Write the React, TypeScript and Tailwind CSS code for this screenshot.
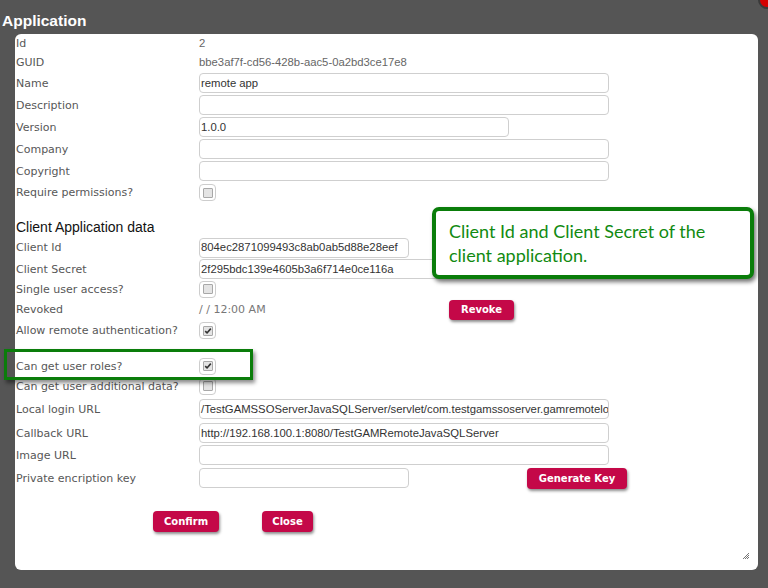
import React from "react";

const labelFont = { fontFamily: '"Liberation Sans", Arial, sans-serif' };
const verdana = { fontFamily: '"DejaVu Sans", Verdana, sans-serif' };

function Checkbox({ checked = false }: { checked?: boolean }) {
  return (
    <span className="flex h-[17px] w-[17px] items-center justify-center rounded-[4px] border border-[#cdcdcd] bg-white">
      <span className="relative flex h-[10px] w-[10px] items-center justify-center rounded-[1px] border border-[#a8a8a8] bg-[#e4e4e4]">
        {checked && (
          <svg viewBox="0 0 10 10" className="absolute h-[8px] w-[8px]">
            <path d="M1.5 5.2 L3.8 7.4 L8.5 2" stroke="#333" strokeWidth="2" fill="none" />
          </svg>
        )}
      </span>
    </span>
  );
}

function TextInput({ value = "", width }: { value?: string; width: string }) {
  return (
    <div
      className={`flex h-[20px] items-center overflow-hidden whitespace-nowrap rounded-[4px] border border-[#cfcfcf] bg-white pl-px text-[11.3px] text-[#333] ${width}`}
    >
      {value}
    </div>
  );
}

function RedButton({ children, className = "" }: { children: React.ReactNode; className?: string }) {
  return (
    <button
      className={`flex items-center justify-center rounded-[4px] bg-[#c40848] text-[10px] font-bold text-white shadow-[1px_2px_3px_rgba(0,0,0,0.45)] ${className}`}
      style={verdana}
    >
      {children}
    </button>
  );
}

function Row({ label, h, children }: { label: string; h: string; children?: React.ReactNode }) {
  return (
    <div className={`flex items-center ${h}`}>
      <div className="w-[184px] pl-px pt-[2px] text-[11px] text-[#575757]" style={verdana}>
        {label}
      </div>
      <div className="flex items-center">{children}</div>
    </div>
  );
}

export default function App() {
  return (
    <div className="relative h-[588px] w-[768px] overflow-hidden bg-[#555555]" style={labelFont}>
      {/* window header */}
      <div className="flex h-[34px] items-center pl-[2px] pt-[7px] text-[15.5px] font-bold text-white">Application</div>
      <div className="absolute left-[758px] top-[-9px] h-[18px] w-[18px] rounded-full border-2 border-[#3a3a3a] bg-[#d40000]" />

      <div className="relative ml-[15px] h-[536px] w-[743px] rounded-[6px] bg-white">
        <Row label="Id" h="h-[18px]">
          <span className="text-[11.3px] text-[#666]">2</span>
        </Row>
        <Row label="GUID" h="h-[20px]">
          <span className="text-[11.3px] text-[#666]">bbe3af7f-cd56-428b-aac5-0a2bd3ce17e8</span>
        </Row>
        <Row label="Name" h="h-[22px]">
          <TextInput value="remote app" width="w-[410px]" />
        </Row>
        <Row label="Description" h="h-[22px]">
          <TextInput width="w-[410px]" />
        </Row>
        <Row label="Version" h="h-[22px]">
          <TextInput value="1.0.0" width="w-[310px]" />
        </Row>
        <Row label="Company" h="h-[22px]">
          <TextInput width="w-[410px]" />
        </Row>
        <Row label="Copyright" h="h-[22px]">
          <TextInput width="w-[410px]" />
        </Row>
        <Row label="Require permissions?" h="h-[21px]">
          <Checkbox />
        </Row>

        <div className="mt-[14px] flex h-[20px] items-center pl-px text-[14px] text-[#111]">Client Application data</div>

        <Row label="Client Id" h="h-[21px]">
          <TextInput value="804ec2871099493c8ab0ab5d88e28eef" width="w-[210px]" />
        </Row>
        <Row label="Client Secret" h="h-[22px]">
          <TextInput value="2f295bdc139e4605b3a6f714e0ce116a" width="w-[410px]" />
        </Row>
        <Row label="Single user access?" h="h-[18px]">
          <Checkbox />
        </Row>
        <Row label="Revoked" h="h-[23px]">
          <span className="w-[250px] pt-[2px] text-[11px] text-[#777]" style={verdana}>
            / / 12:00 AM
          </span>
          <RedButton className="h-[20px] w-[65px]">Revoke</RedButton>
        </Row>
        <Row label="Allow remote authentication?" h="h-[19px]">
          <Checkbox checked />
        </Row>

        <div className="mt-[16px]" />
        <Row label="Can get user roles?" h="h-[20px]">
          <Checkbox checked />
        </Row>
        <Row label="Can get user additional data?" h="h-[20px]">
          <Checkbox />
        </Row>
        <Row label="Local login URL" h="h-[26px]">
          <TextInput value="/TestGAMSSOServerJavaSQLServer/servlet/com.testgamssoserver.gamremotelogin" width="w-[410px]" />
        </Row>
        <Row label="Callback URL" h="h-[22px]">
          <TextInput value="http://192.168.100.1:8080/TestGAMRemoteJavaSQLServer" width="w-[410px]" />
        </Row>
        <Row label="Image URL" h="h-[22px]">
          <TextInput width="w-[410px]" />
        </Row>
        <Row label="Private encription key" h="h-[24px]">
          <TextInput width="w-[210px]" />
          <RedButton className="ml-[118px] h-[21px] w-[100px]">Generate Key</RedButton>
        </Row>

        <div className="mt-[21px] flex pl-[138px]">
          <RedButton className="h-[21px] w-[66px]">Confirm</RedButton>
          <RedButton className="ml-[43px] h-[21px] w-[51px]">Close</RedButton>
        </div>

        {/* resize grip */}
        <svg viewBox="0 0 8 8" className="absolute bottom-[10px] right-[8px] h-[8px] w-[8px]">
          <path d="M7 1 L1 7 M7 3 L3 7 M7 5 L5 7" stroke="#777" strokeWidth="1" />
        </svg>

        {/* callout */}
        <div className="absolute left-[417px] top-[173px] h-[72px] w-[322px] rounded-[7px] border-[4px] border-[#0a7d0a] bg-white pl-[13px] pt-[8px] shadow-[2px_3px_4px_rgba(0,0,0,0.55)]">
          <p className="text-[18px] leading-[24px] text-[#118a11]" style={{ fontFamily: 'Lato, "Open Sans", sans-serif' }}>
            Client Id and Client Secret of the
            <br />
            client application.
          </p>
        </div>
      </div>

      {/* highlight box around "Can get user roles?" */}
      <div className="absolute left-[4px] top-[349px] h-[31px] w-[249px] border-[3px] border-[#0a7d0a] shadow-[2px_3px_4px_rgba(0,0,0,0.45)]" />
    </div>
  );
}
